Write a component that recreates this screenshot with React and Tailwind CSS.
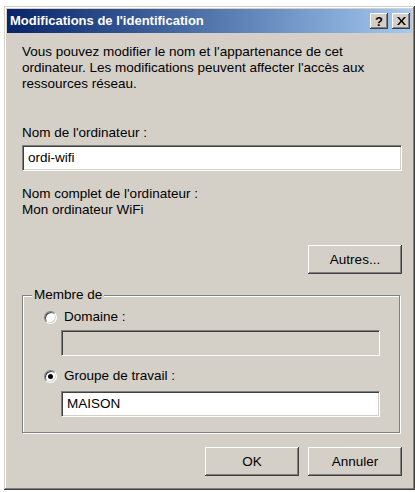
import React from 'react'

const FONT = { fontFamily: '"Liberation Sans", Arial, sans-serif' }

function TitleButton({ children }) {
  return (
    <div className="w-[18px] h-[16px] bg-[#d4d0c8] flex items-center justify-center shadow-[inset_-1px_-1px_0_#404040,inset_1px_1px_0_#ffffff,inset_-2px_-2px_0_#808080] text-black text-[13px] font-bold leading-none">
      {children}
    </div>
  )
}

function Button({ children, className = '' }) {
  return (
    <button className={`h-[29px] bg-[#d4d0c8] text-black text-[13.5px] shadow-[inset_-1px_-1px_0_#404040,inset_1px_1px_0_#ffffff,inset_-2px_-2px_0_#808080] ${className}`}>
      {children}
    </button>
  )
}

function Field({ value = '', disabled = false, className = '' }) {
  return (
    <div
      className={`h-[26px] flex items-center pl-[5px] text-[13.5px] text-black border border-t-[#808080] border-l-[#808080] border-b-white border-r-white shadow-[inset_1px_1px_0_#404040,inset_-1px_-1px_0_#d4d0c8] ${disabled ? 'bg-[#d4d0c8]' : 'bg-white'} ${className}`}
    >
      {value}
    </div>
  )
}

function Radio({ checked, label }) {
  return (
    <div className="flex items-center h-[16px]">
      <div className="w-[13px] h-[13px] rounded-full bg-white border border-t-[#808080] border-l-[#808080] border-b-white border-r-white shadow-[inset_1px_1px_0_#404040,inset_-1px_-1px_0_#d4d0c8] flex items-center justify-center">
        {checked && <div className="w-[5px] h-[5px] rounded-full bg-black" />}
      </div>
      <span className="ml-[7px]">{label}</span>
    </div>
  )
}

export default function App() {
  return (
    <div className="min-h-screen bg-white pt-[6px] pl-[4px]" style={FONT}>
      <div className="w-[411px] h-[484px] bg-[#d4d0c8] p-[3px] flex flex-col shadow-[inset_-1px_-1px_0_#404040,inset_1px_1px_0_#d4d0c8,inset_-2px_-2px_0_#808080,inset_2px_2px_0_#ffffff]">
        {/* title bar */}
        <div className="h-[24px] flex items-center justify-between pl-[3px] pr-[2px] bg-gradient-to-r from-[#0a246a] to-[#a6caf0]">
          <span className="text-white font-bold text-[13px]">Modifications de l'identification</span>
          <div className="flex gap-[4px]">
            <TitleButton>?</TitleButton>
            <TitleButton>
              <svg width="9" height="8" viewBox="0 0 9 8">
                <path d="M0 0h2l2.5 3 2.5-3h2L5.5 4 9 8H7L4.5 5 2 8H0l3.5-4z" fill="#000" />
              </svg>
            </TitleButton>
          </div>
        </div>

        {/* body */}
        <div className="pl-[15px] pr-[10px] text-[13.5px] text-black leading-[16px]">
          <p className="mt-[11px]">
            Vous pouvez modifier le nom et l'appartenance de cet
            <br />
            ordinateur. Les modifications peuvent affecter l'accès aux
            <br />
            ressources réseau.
          </p>

          <div className="mt-[33px]">Nom de l'ordinateur :</div>
          <Field value="ordi-wifi" className="mt-[4px]" />

          <div className="mt-[15px]">Nom complet de l'ordinateur :</div>
          <div>Mon ordinateur WiFi</div>

          <div className="mt-[27px] flex justify-end">
            <Button className="w-[94px]">Autres...</Button>
          </div>

          <div className="relative mt-[21px] w-[378px] border border-[#808080] shadow-[1px_1px_0_#ffffff,inset_1px_1px_0_#ffffff] pl-[21px] pt-[13px] pb-[15px]">
            <span className="absolute left-[9px] top-[-9px] bg-[#d4d0c8] px-[2px]">Membre de</span>
            <Radio label="Domaine :" />
            <Field disabled className="mt-[5px] ml-[17px] w-[319px]" />
            <div className="mt-[12px]">
              <Radio checked label="Groupe de travail :" />
            </div>
            <Field value="MAISON" className="mt-[7px] ml-[17px] w-[319px]" />
          </div>

          <div className="mt-[14px] flex justify-end gap-[9px]">
            <Button className="w-[94px]">OK</Button>
            <Button className="w-[94px]">Annuler</Button>
          </div>
        </div>
      </div>
    </div>
  )
}
